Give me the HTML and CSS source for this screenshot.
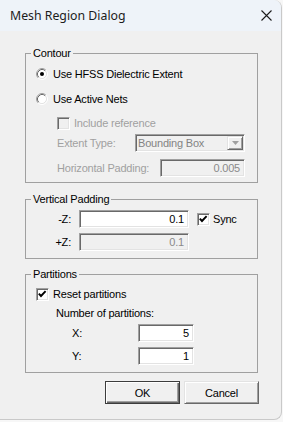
FILE: index.html
```html
<!DOCTYPE html>
<html lang="en">
<head>
    <meta charset="UTF-8">
    <title>Mesh Region Dialog</title>
    <link rel="stylesheet" href="styles.css">
</head>
<body>
    <div class="window">
        <div class="titlebar">
            <span class="title">Mesh Region Dialog</span>
            <svg class="close" width="11" height="11" viewBox="0 0 11 11">
                <path d="M0.5 0.5 L10.5 10.5 M10.5 0.5 L0.5 10.5" stroke="#1c1c1c" stroke-width="1.1" fill="none"/>
            </svg>
        </div>
        <div class="content">
            <fieldset class="group">
                <legend>Contour</legend>
                <div class="row r-ext">
                    <svg class="radio" width="12" height="12" viewBox="0 0 12 12">
                        <circle cx="6" cy="6" r="4.2" fill="#fff"/>
                        <path d="M2.11 9.89 A5.5 5.5 0 0 1 9.89 2.11" stroke="#a0a0a0" fill="none"/>
                        <path d="M9.89 2.11 A5.5 5.5 0 0 1 2.11 9.89" stroke="#fff" fill="none"/>
                        <path d="M2.82 9.18 A4.5 4.5 0 0 1 9.18 2.82" stroke="#696969" fill="none"/>
                        <path d="M9.18 2.82 A4.5 4.5 0 0 1 2.82 9.18" stroke="#e3e3e3" fill="none"/>
                        <circle cx="6" cy="6" r="2" fill="#000"/>
                    </svg>
                    <span>Use HFSS Dielectric Extent</span>
                </div>
                <div class="row r-nets">
                    <svg class="radio" width="12" height="12" viewBox="0 0 12 12">
                        <circle cx="6" cy="6" r="4.2" fill="#fff"/>
                        <path d="M2.11 9.89 A5.5 5.5 0 0 1 9.89 2.11" stroke="#a0a0a0" fill="none"/>
                        <path d="M9.89 2.11 A5.5 5.5 0 0 1 2.11 9.89" stroke="#fff" fill="none"/>
                        <path d="M2.82 9.18 A4.5 4.5 0 0 1 9.18 2.82" stroke="#696969" fill="none"/>
                        <path d="M9.18 2.82 A4.5 4.5 0 0 1 2.82 9.18" stroke="#e3e3e3" fill="none"/>
                    </svg>
                    <span>Use Active Nets</span>
                </div>
                <div class="row r-incl disabled">
                    <span class="check off"></span>
                    <span>Include reference</span>
                </div>
                <div class="row r-type disabled">
                    <span class="label type-label">Extent Type:</span>
                    <div class="combo">
                        <span class="combo-text">Bounding Box</span>
                        <span class="combo-btn">
                            <svg width="7" height="4" viewBox="0 0 7 4"><path d="M0 0 H7 L3.5 4 Z" fill="#a0a0a0"/></svg>
                        </span>
                    </div>
                </div>
                <div class="row r-hpad disabled">
                    <span class="label hpad-label">Horizontal Padding:</span>
                    <span class="edit off hpad-edit">0.005</span>
                </div>
            </fieldset>

            <fieldset class="group vpad">
                <legend>Vertical Padding</legend>
                <div class="row r-mz">
                    <span class="label z-label">-Z:</span>
                    <span class="edit z-edit">0.1</span>
                    <span class="check sync-check">
                        <svg width="11" height="11" viewBox="0 0 11 11"><path d="M1.8 4.6 L4 7 L8.6 2.2" stroke="#000" stroke-width="1.9" fill="none"/></svg>
                    </span>
                    <span>Sync</span>
                </div>
                <div class="row r-pz">
                    <span class="label z-label">+Z:</span>
                    <span class="edit off z-edit">0.1</span>
                </div>
            </fieldset>

            <fieldset class="group parts">
                <legend>Partitions</legend>
                <div class="row r-reset">
                    <span class="check">
                        <svg width="11" height="11" viewBox="0 0 11 11"><path d="M1.8 4.6 L4 7 L8.6 2.2" stroke="#000" stroke-width="1.9" fill="none"/></svg>
                    </span>
                    <span>Reset partitions</span>
                </div>
                <div class="row r-num">Number of partitions:</div>
                <div class="row r-x">
                    <span class="label xy-label">X:</span>
                    <span class="edit xy-edit">5</span>
                </div>
                <div class="row r-y">
                    <span class="label xy-label">Y:</span>
                    <span class="edit xy-edit">1</span>
                </div>
            </fieldset>

            <div class="buttons">
                <button class="btn default">OK</button>
                <button class="btn">Cancel</button>
            </div>
        </div>
    </div>
</body>
</html>
```

FILE: styles.css
```css
body {
    margin: 0;
    background: #f7f7f7;
    font-family: "Liberation Sans", Arial, sans-serif;
    font-size: 11px;
    letter-spacing: -0.2px;
    color: #000;
}
.window {
    width: 282px;
    height: 420px;
    box-sizing: border-box;
    background: #f0f0f0;
    border-right: 1px solid #c9c9c9;
    border-bottom: 1px solid #c9c9c9;
    border-radius: 0 8px 8px 0;
    overflow: hidden;
}
.titlebar {
    height: 31px;
    display: flex;
    align-items: center;
    justify-content: space-between;
    padding: 0 9px 0 10px;
    background: #eef3f9;
}
.title {
    font-family: "Noto Sans", sans-serif;
    font-size: 12.3px;
    letter-spacing: 0;
    color: #1c1c1c;
}
.content {
    padding: 16px 0 0 25px;
}
.group {
    width: 233px;
    box-sizing: border-box;
    margin: 0;
    padding: 0 0 5px 0;
    border: 1px solid #a0a0a0;
    min-inline-size: 0;
}
.group legend {
    padding: 0 2px;
    margin-left: 5px;
    line-height: 13px;
}
.vpad {
    margin-top: 10px;
    padding-bottom: 7px;
}
.parts {
    margin-top: 9px;
    padding-bottom: 7px;
}
.row {
    display: flex;
    align-items: center;
    height: 20px;
    white-space: nowrap;
}
.disabled {
    color: #a0a0a0;
}
.radio {
    margin-right: 5px;
    flex: none;
}
.r-ext { margin-top: 4px; padding-left: 10px; }
.r-nets { margin-top: 5px; padding-left: 10px; }
.r-incl { margin-top: 4px; padding-left: 31px; }
.r-type { margin-top: 1px; height: 18px; padding-left: 31px; }
.r-hpad { margin-top: 7px; height: 18px; padding-left: 31px; }
.r-mz { margin-top: 4px; height: 18px; }
.r-pz { margin-top: 5px; height: 18px; }
.r-reset { margin-top: 3px; padding-left: 10px; }
.r-num { margin-top: 1px; height: 16px; padding-left: 30px; }
.r-x { margin-top: 3px; height: 18px; padding-left: 46px; }
.r-y { margin-top: 5px; height: 18px; padding-left: 46px; }

.check {
    width: 13px;
    height: 13px;
    box-sizing: border-box;
    flex: none;
    margin-right: 4px;
    background: #fff;
    border: 1px solid;
    border-color: #a0a0a0 #fff #fff #a0a0a0;
    box-shadow: inset 1px 1px 0 #696969, inset -1px -1px 0 #e3e3e3;
}
.check svg {
    display: block;
}
.check.off {
    background: #f0f0f0;
}
.sync-check {
    margin-left: 8px;
    margin-right: 3px;
}
.label {
    flex: none;
}
.type-label { width: 78px; }
.hpad-label { width: 103px; }
.z-label {
    width: 45px;
    text-align: right;
    margin-right: 8px;
}
.xy-label { width: 66px; }

.edit {
    height: 18px;
    box-sizing: border-box;
    flex: none;
    background: #fff;
    border: 1px solid;
    border-color: #a0a0a0 #fff #fff #a0a0a0;
    box-shadow: inset 1px 1px 0 #696969, inset -1px -1px 0 #e3e3e3;
    text-align: right;
    padding-right: 4px;
    line-height: 16px;
}
.edit.off {
    background: #f0f0f0;
    color: #8a8a8a;
}
.hpad-edit { width: 85px; }
.z-edit { width: 110px; }
.xy-edit { width: 56px; }

.combo {
    width: 110px;
    height: 18px;
    box-sizing: border-box;
    display: flex;
    align-items: center;
    justify-content: space-between;
    background: #f0f0f0;
    border: 1px solid;
    border-color: #a0a0a0 #fff #fff #a0a0a0;
    box-shadow: inset 1px 1px 0 #696969, inset -1px -1px 0 #e3e3e3;
    padding: 0 1px 0 2px;
}
.combo-text {
    color: #838383;
}
.combo-btn {
    width: 16px;
    height: 14px;
    box-sizing: border-box;
    display: flex;
    align-items: center;
    justify-content: center;
    border: 1px solid;
    border-color: #e3e3e3 #696969 #696969 #e3e3e3;
    box-shadow: inset 1px 1px 0 #fff, inset -1px -1px 0 #a0a0a0;
}
.combo-btn svg {
    display: block;
}

.buttons {
    width: 234px;
    display: flex;
    justify-content: flex-end;
    gap: 4px;
    margin-top: 8px;
}
.btn {
    width: 75px;
    height: 23px;
    box-sizing: border-box;
    background: #f0f0f0;
    font-family: "Liberation Sans", Arial, sans-serif;
    font-size: 11px;
    letter-spacing: -0.2px;
    color: #000;
    border: 1px solid;
    border-color: #e3e3e3 #696969 #696969 #e3e3e3;
    box-shadow: inset 1px 1px 0 #fff, inset -1px -1px 0 #a0a0a0;
    padding: 0;
}
.btn.default {
    border-color: #3c3c3c;
    box-shadow: inset 1px 1px 0 #fff, inset -1px -1px 0 #696969, inset -2px -2px 0 #a0a0a0;
}
```
